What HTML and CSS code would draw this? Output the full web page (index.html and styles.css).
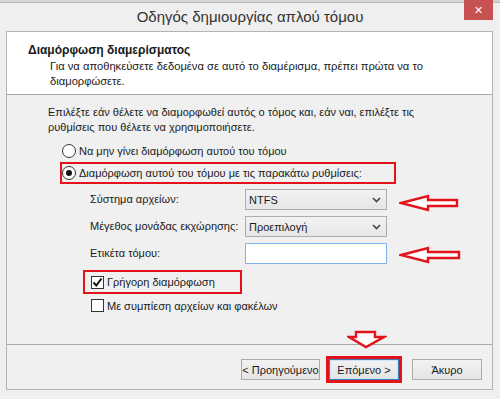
FILE: index.html
```html
<!DOCTYPE html>
<html>
  <head>
    <meta charset="utf-8">
    <title>Οδηγός δημιουργίας απλού τόμου</title>
    <link rel="stylesheet" href="styles.css">
  </head>
  <body>
    <div class="strip"></div>
    <div class="window">
      <div class="titlebar">
        <span class="title">Οδηγός δημιουργίας απλού τόμου</span>
        <span class="close">&#x2715;</span>
      </div>
      <div class="client">
        <div class="header">
          <div class="heading">Διαμόρφωση διαμερίσματος</div>
          <div class="sub">Για να αποθηκεύσετε δεδομένα σε αυτό το διαμέρισμα, πρέπει πρώτα να το διαμορφώσετε.</div>
        </div>
        <div class="content">
          <p class="intro">Επιλέξτε εάν θέλετε να διαμορφωθεί αυτός ο τόμος και, εάν ναι, επιλέξτε τις ρυθμίσεις που θέλετε να χρησιμοποιήσετε.</p>
          <div class="opt">
            <span class="radio"></span>Να μην γίνει διαμόρφωση αυτού του τόμου
          </div>
          <div class="opt marked">
            <span class="radio on"></span>Διαμόρφωση αυτού του τόμου με τις παρακάτω ρυθμίσεις:
          </div>
          <div class="form">
            <label>Σύστημα αρχείων:</label>
            <div class="select">NTFS<svg width="9" height="6" viewBox="0 0 9 6"><path d="M1 1l3.5 3.5L8 1" fill="none" stroke="#444" stroke-width="1.6"/></svg></div>
            <label>Μέγεθος μονάδας εκχώρησης:</label>
            <div class="select">Προεπιλογή<svg width="9" height="6" viewBox="0 0 9 6"><path d="M1 1l3.5 3.5L8 1" fill="none" stroke="#444" stroke-width="1.6"/></svg></div>
            <label>Ετικέτα τόμου:</label>
            <div class="input"></div>
          </div>
          <div class="check marked">
            <span class="box"><svg width="11" height="11" viewBox="0 0 11 11"><path d="M1.5 5.5l2.8 3L9.5 1.5" fill="none" stroke="#111" stroke-width="2"/></svg></span>Γρήγορη διαμόρφωση
          </div>
          <div class="check">
            <span class="box"></span>Με συμπίεση αρχείων και φακέλων
          </div>
        </div>
        <div class="footer">
          <button class="btn prev">&lt; Προηγούμενο</button>
          <span class="mark"><button class="btn default">Επόμενο &gt;</button></span>
          <button class="btn">Άκυρο</button>
        </div>
      </div>
    </div>

    <svg class="arrow arrow-fs" width="62" height="18" viewBox="0 0 62 18">
      <polygon points="2,9 29,2 29,6 58,6 58,12 29,12 29,16" fill="#fff" stroke="#e3131b" stroke-width="2.4" stroke-linejoin="miter"/>
    </svg>
    <svg class="arrow arrow-label" width="64" height="18" viewBox="0 0 64 18">
      <polygon points="2,9 29,2 29,6 60,6 60,12 29,12 29,16" fill="#fff" stroke="#e3131b" stroke-width="2.4" stroke-linejoin="miter"/>
    </svg>
    <svg class="arrow arrow-next" width="40" height="20" viewBox="0 0 40 20">
      <polygon points="9,2 28,2 28,7 37,7 19,17 2,7 9,7" fill="#fff" stroke="#e3131b" stroke-width="2.4" stroke-linejoin="miter"/>
    </svg>
  </body>
</html>
```

FILE: styles.css
```css
body {
  margin: 0;
  background: #efefef;
  font-family: "Liberation Sans", Arial, sans-serif;
  font-size: 11px;
  color: #1a1a1a;
  position: relative;
  height: 399px;
  overflow: hidden;
}

.strip {
  height: 3px;
  background: #d4d4d4;
  border-bottom: 1px solid #b8b8b8;
  box-sizing: border-box;
}

.titlebar {
  height: 28px;
  position: relative;
  text-align: center;
}

.title {
  font-size: 15px;
  line-height: 28px;
  color: #333;
}

.close {
  position: absolute;
  top: -3px;
  right: 7px;
  width: 29px;
  height: 20px;
  background: #c75050;
  color: #fff;
  font-size: 11px;
  line-height: 20px;
  text-align: center;
}

.client {
  margin: 0 7px 0 6px;
  border: 1px solid #b4b4b4;
  background: #f0f0f0;
}

.header {
  background: #fff;
  height: 63px;
  border-bottom: 1px solid #a8a8a8;
  padding: 11px 0 0 21px;
  box-sizing: border-box;
}

.heading {
  font-weight: bold;
  font-size: 12px;
  line-height: 14px;
}

.sub {
  margin: 2px 40px 0 22px;
  font-size: 11.2px;
  line-height: 15px;
}

.content {
  height: 249px;
  padding: 10px 0 0 41px;
  box-sizing: border-box;
}

.intro {
  margin: 0 0 5px;
  width: 400px;
  line-height: 15px;
}

.opt {
  display: flex;
  align-items: center;
  margin-left: 12px;
  width: 336px;
  height: 22px;
  border: 2px solid transparent;
  box-sizing: border-box;
  white-space: nowrap;
}

.marked {
  border-color: #e3131b;
}

.radio {
  flex: none;
  width: 12px;
  height: 12px;
  border: 1px solid #333;
  border-radius: 50%;
  background: #fff;
  margin: 0 3px 0 0;
  position: relative;
}

.radio.on::after {
  content: "";
  position: absolute;
  left: 3px;
  top: 3px;
  width: 6px;
  height: 6px;
  border-radius: 50%;
  background: #111;
}

.form {
  display: grid;
  grid-template-columns: 155px 142px;
  row-gap: 6px;
  margin: 5px 0 0 42px;
  align-items: center;
}

.form label {
  line-height: 21px;
  white-space: nowrap;
}

.select,
.input {
  height: 21px;
  box-sizing: border-box;
  border: 1px solid #adadad;
}

.select {
  background: linear-gradient(#f2f2f2, #e6e6e6);
  display: flex;
  align-items: center;
  justify-content: space-between;
  padding: 0 5px 0 3px;
}

.input {
  background: #fff;
  border-color: #7eb4ea;
}

.check {
  display: flex;
  align-items: center;
  margin-left: 35px;
  width: 159px;
  height: 23px;
  border: 2px solid transparent;
  box-sizing: border-box;
  padding-left: 6px;
  white-space: nowrap;
}

.check.marked {
  height: 24px;
  margin-top: 6px;
  border-color: #e3131b;
}

.box {
  flex: none;
  width: 11px;
  height: 11px;
  border: 1px solid #333;
  background: #fff;
  margin-right: 3px;
  display: flex;
}

.footer {
  border-top: 1px solid #a8a8a8;
  height: 45px;
  display: flex;
  align-items: flex-start;
  justify-content: flex-end;
  padding: 11px 10px 0 0;
  box-sizing: border-box;
}

.btn {
  font: inherit;
  color: #1a1a1a;
  width: 70px;
  height: 21px;
  margin-top: 3px;
  border: 1px solid #acacac;
  background: linear-gradient(#f2f2f2, #e5e5e5);
  padding: 0;
  white-space: nowrap;
}

.btn.prev {
  width: 79px;
}

.mark {
  border: 3px solid #e3131b;
  padding: 0;
  margin: 0 10px 0 6px;
  display: flex;
}

.mark .btn {
  margin: 0;
}

.btn.default {
  border-color: #3c7fb1;
  box-shadow: inset 0 0 0 1px #cfe5f7;
}

.arrow {
  position: absolute;
}

.arrow-fs {
  left: 399px;
  top: 194px;
}

.arrow-label {
  left: 399px;
  top: 246px;
}

.arrow-next {
  left: 347px;
  top: 330px;
}
```
